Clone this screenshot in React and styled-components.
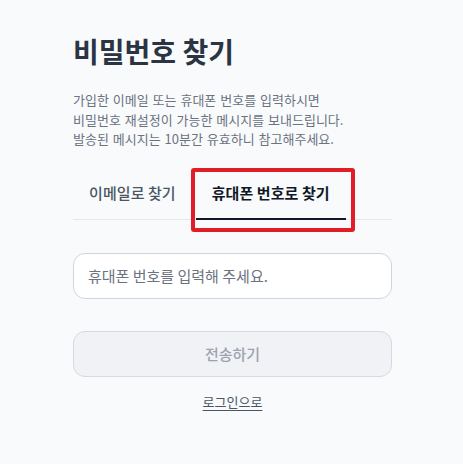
import styled, { createGlobalStyle } from "styled-components";

const Global = createGlobalStyle`
  html, body {
    margin: 0;
    padding: 0;
    background: #f8fafc;
  }
  body {
    font-family: "Noto Sans CJK KR", "Noto Sans", sans-serif;
    -webkit-font-smoothing: antialiased;
  }
`;

const Page = styled.div`
  min-height: 464px;
  box-sizing: border-box;
  padding: 34px 71px 0 73px;
  background: #f8fafc;
`;

const Box = styled.div`
  width: 319px;
  display: flex;
  flex-direction: column;
`;

const Title = styled.h1`
  margin: 0;
  font-size: 28px;
  line-height: 35px;
  font-weight: 700;
  color: #2b3442;
`;

const Desc = styled.p`
  margin: 21px 0 0;
  font-size: 13px;
  line-height: 19.5px;
  word-spacing: 1px;
  color: #6b7280;
`;

const Tabs = styled.div`
  display: flex;
  gap: 4px;
  margin-top: 23px;
  border-bottom: 1px solid #e5e7eb;
`;

const Tab = styled.button`
  position: relative;
  background: none;
  border: none;
  border-bottom: 2px solid ${(p) => (p.$active ? "#111827" : "transparent")};
  margin-bottom: -1px;
  padding: 10px 16px 14px;
  font-family: inherit;
  font-size: 15px;
  line-height: 22px;
  letter-spacing: 0.005em;
  font-weight: ${(p) => (p.$active ? 600 : 500)};
  color: ${(p) => (p.$active ? "#111827" : "#4b5563")};
  cursor: pointer;
`;

const Highlight = styled.span`
  position: absolute;
  left: -5px;
  right: -9px;
  top: -4px;
  bottom: -14px;
  border: 4px solid #e11d27;
  border-radius: 3px;
  pointer-events: none;
`;

const Field = styled.input`
  margin-top: 33px;
  height: 46px;
  box-sizing: border-box;
  width: 100%;
  padding: 0 14px;
  border: 1px solid #d1d5db;
  border-radius: 12px;
  background: #fff;
  font-family: inherit;
  font-size: 15px;
  color: #111827;
  outline: none;

  &::placeholder {
    color: #6b7280;
  }
`;

const Submit = styled.button`
  margin-top: 32px;
  height: 46px;
  width: 100%;
  border: 1px solid #d6d9de;
  border-radius: 12px;
  background: #f1f2f5;
  font-family: inherit;
  font-size: 15px;
  font-weight: 500;
  color: #9ca3af;
`;

const Back = styled.a`
  align-self: center;
  margin-top: 15px;
  font-size: 13px;
  line-height: 20px;
  color: #4b5563;
  text-decoration: underline;
  text-underline-offset: 3px;
  cursor: pointer;
`;

export default function App() {
  return (
    <>
      <Global />
      <Page>
        <Box>
          <Title>비밀번호 찾기</Title>
          <Desc>
            가입한 이메일 또는 휴대폰 번호를 입력하시면
            <br />
            비밀번호 재설정이 가능한 메시지를 보내드립니다.
            <br />
            발송된 메시지는 10분간 유효하니 참고해주세요.
          </Desc>
          <Tabs>
            <Tab>이메일로 찾기</Tab>
            <Tab $active>
              휴대폰 번호로 찾기
              <Highlight />
            </Tab>
          </Tabs>
          <Field placeholder="휴대폰 번호를 입력해 주세요." />
          <Submit disabled>전송하기</Submit>
          <Back>로그인으로</Back>
        </Box>
      </Page>
    </>
  );
}
